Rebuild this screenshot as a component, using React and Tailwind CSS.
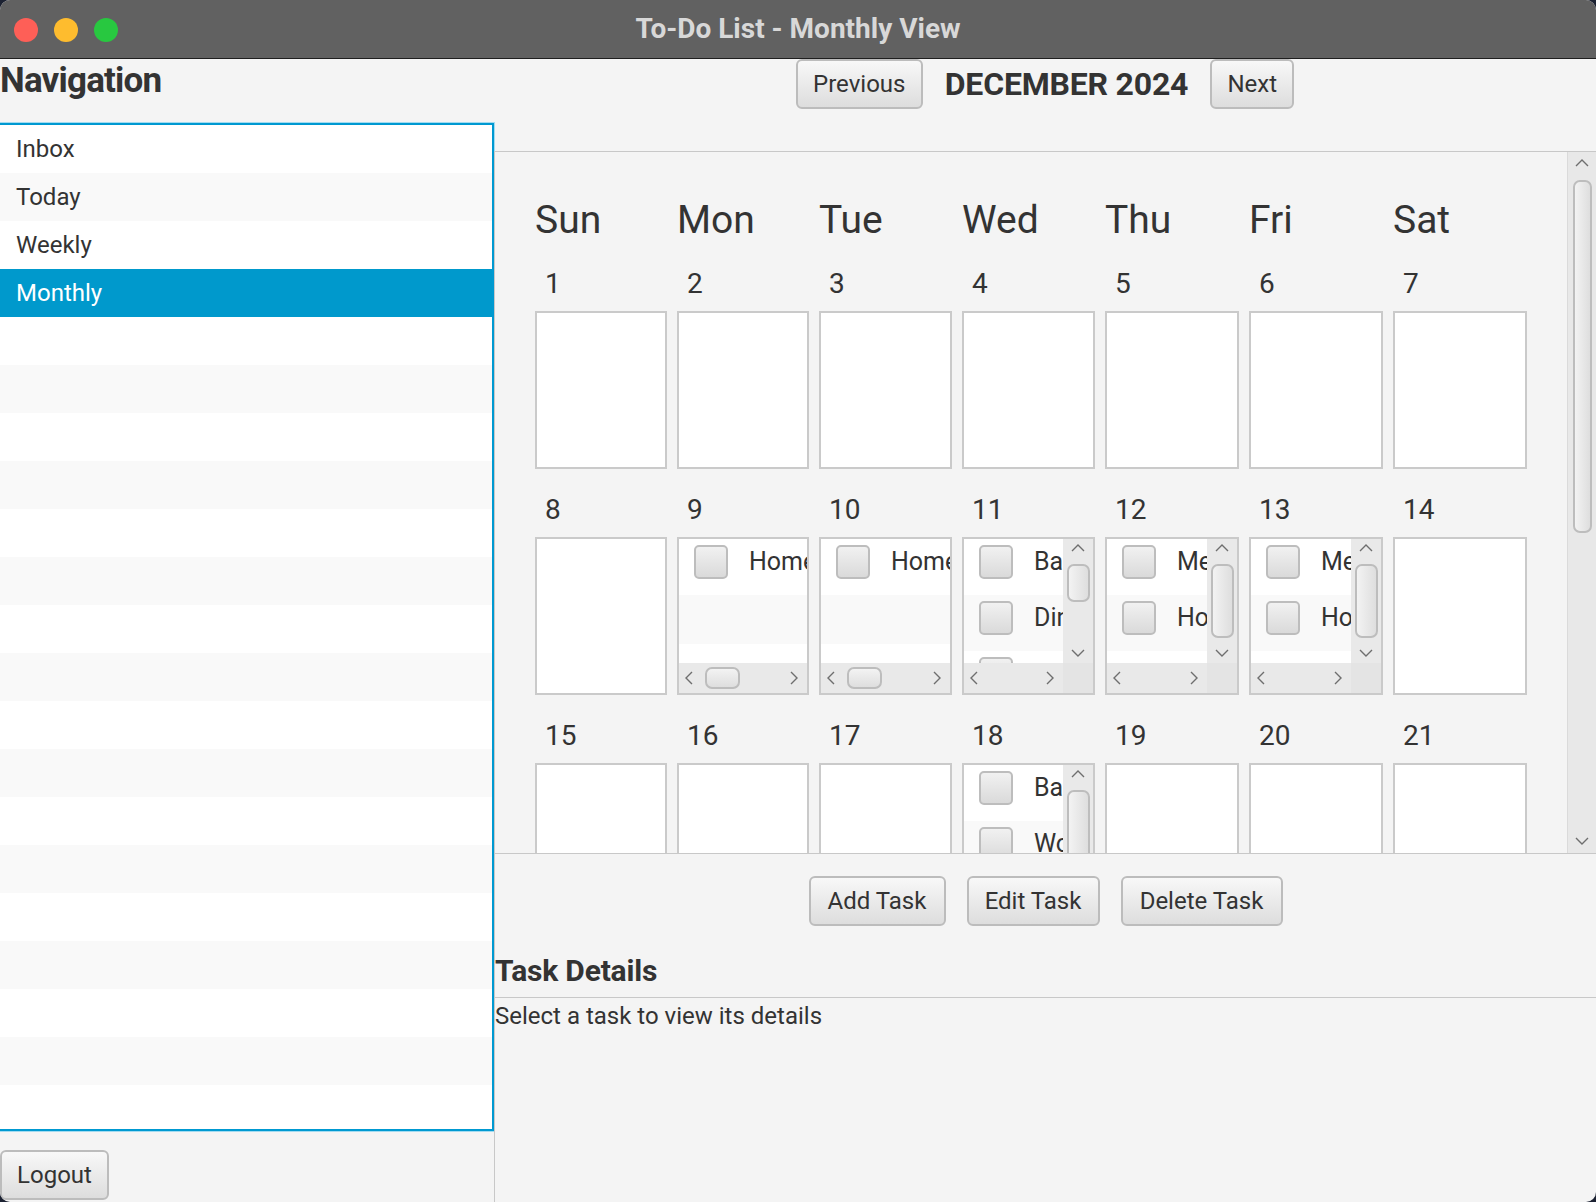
import React from "react";

const days = ["Sun", "Mon", "Tue", "Wed", "Thu", "Fri", "Sat"];
const colWidths = ["pr-[10px]", "pr-[10px]", "pr-[10px]", "pr-[10px]", "pr-[10px]", "pr-[10px]", ""];

// tasks shown inside the day cells
const weeks = [
  [{ n: 1 }, { n: 2 }, { n: 3 }, { n: 4 }, { n: 5 }, { n: 6 }, { n: 7 }],
  [
    { n: 8 },
    { n: 9, items: ["Homework"] },
    { n: 10, items: ["Homework"] },
    { n: 11, items: ["Bank", "Dinner", "Gym"], vthumb: 38 },
    { n: 12, items: ["Meeting", "Homework"], vthumb: 74 },
    { n: 13, items: ["Meeting", "Homework"], vthumb: 74 },
    { n: 14 },
  ],
  [
    { n: 15 },
    { n: 16 },
    { n: 17 },
    { n: 18, items: ["Bank", "Work"], vthumb: 74 },
    { n: 19 },
    { n: 20 },
    { n: 21 },
  ],
];

const navItems = ["Inbox", "Today", "Weekly", "Monthly"];

function Chevron({ dir }) {
  const vertical = dir === "up" || dir === "down";
  const pts = {
    up: "1,7 7,1 13,7",
    down: "1,1 7,7 13,1",
    left: "7,1 1,7 7,13",
    right: "1,1 7,7 1,13",
  };
  return (
    <svg
      width={vertical ? 14 : 8}
      height={vertical ? 8 : 14}
      viewBox={vertical ? "0 0 14 8" : "0 0 8 14"}
      className="shrink-0"
    >
      <polyline points={pts[dir]} fill="none" stroke="#6e6e6e" strokeWidth="1.4" />
    </svg>
  );
}

function Button({ children, className = "" }) {
  return (
    <button
      className={`flex h-[50px] shrink-0 items-center justify-center rounded-[6px] border-2 border-[#bcbcbc] bg-linear-to-b from-[#f8f8f8] to-[#dddddd] text-[24px] leading-none text-[#333] ${className}`}
    >
      {children}
    </button>
  );
}

function Checkbox() {
  return (
    <div className="h-[34px] w-[34px] shrink-0 rounded-[5px] border-2 border-[#bdbdbd] bg-linear-to-b from-[#f1f1f1] to-[#dadada]" />
  );
}

function VScroll({ thumb }) {
  return (
    <div className="flex w-[30px] shrink-0 flex-col items-center bg-[#e9e9e9] pt-[5px] pb-[6px]">
      <Chevron dir="up" />
      <div
        className="mt-[12px] w-[23px] shrink-0 rounded-[7px] border-2 border-[#bdbdbd] bg-linear-to-r from-[#f3f3f3] to-[#dedede]"
        style={{ height: thumb }}
      />
      <div className="mt-auto">
        <Chevron dir="down" />
      </div>
    </div>
  );
}

function HScroll({ thumb, corner }) {
  return (
    <div className="flex h-[30px] shrink-0 bg-[#e9e9e9]">
      <div className="flex flex-1 items-center pl-[6px] pr-[9px]">
        <Chevron dir="left" />
        {thumb && (
          <div className="ml-[12px] h-[22px] w-[35px] rounded-[7px] border-2 border-[#bdbdbd] bg-linear-to-b from-[#f3f3f3] to-[#dedede]" />
        )}
        <div className="ml-auto">
          <Chevron dir="right" />
        </div>
      </div>
      {corner && <div className="w-[30px] bg-[#e4e4e4]" />}
    </div>
  );
}

function DayCell({ day }) {
  if (!day.items) {
    return <div className="h-[158px] border-2 border-[#cacaca] bg-white" />;
  }
  return (
    <div className="flex h-[158px] flex-col overflow-hidden border-2 border-[#cacaca] bg-white">
      <div className="flex min-h-0 flex-1">
        <div className="min-w-0 flex-1 overflow-hidden">
          {day.items.map((label, i) => (
            <div
              key={i}
              className={`flex h-[56px] items-center pb-[10px] pl-[15px] ${i % 2 ? "bg-[#f9f9f9]" : "bg-white"}`}
            >
              <Checkbox />
              <span className="ml-[21px] whitespace-nowrap text-[25px] text-[#333]">{label}</span>
            </div>
          ))}
          {!day.vthumb && <div className="h-[49px] bg-[#f9f9f9]" />}
        </div>
        {day.vthumb && <VScroll thumb={day.vthumb} />}
      </div>
      <HScroll thumb={!day.vthumb} corner={!!day.vthumb} />
    </div>
  );
}

export default function App() {
  const navRows = Array.from({ length: 21 }, (_, i) => navItems[i] || "");

  return (
    <div className="h-[1202px] w-[1596px] overflow-hidden bg-[#1c2232] font-['Roboto','Noto_Sans',sans-serif] text-[#333]">
      <div className="flex h-full flex-col overflow-hidden rounded-[10px] bg-[#f4f4f4]">
        {/* title bar */}
        <div className="grid h-[59px] shrink-0 grid-cols-[1fr_auto_1fr] items-center border-b border-[#1f1f1f] bg-[#616161]">
          <div className="flex gap-[16px] pl-[14px] pt-[2px]">
            <div className="h-[24px] w-[24px] rounded-full bg-[#fe5f57]" />
            <div className="h-[24px] w-[24px] rounded-full bg-[#febc2e]" />
            <div className="h-[24px] w-[24px] rounded-full bg-[#28c840]" />
          </div>
          <div className="text-[28px] font-bold text-[#d8d8d8]">To-Do List - Monthly View</div>
          <div />
        </div>

        <div className="flex min-h-0 flex-1">
          {/* navigation */}
          <aside className="flex w-[494px] shrink-0 flex-col">
            <h2 className="mt-[4px] h-[35px] text-[35px] font-bold leading-[35px] tracking-[-0.8px]">Navigation</h2>
            <div className="-ml-[3px] mt-[25px] h-[1008px] w-[497px] overflow-hidden border-2 border-[#0099d1] bg-white shadow-[0_0_0_1px_#a3dbf0]">
              {navRows.map((label, i) => (
                <div
                  key={i}
                  className={`flex h-[48px] items-center pl-[17px] text-[24px] ${
                    label === "Monthly"
                      ? "bg-[#0099cc] text-white"
                      : i % 2
                      ? "bg-[#f9f9f9] text-[#333]"
                      : "bg-white text-[#333]"
                  }`}
                >
                  {label}
                </div>
              ))}
            </div>
            <Button className="mt-[19px] w-[109px]">Logout</Button>
          </aside>

          {/* calendar */}
          <main className="flex min-w-0 flex-1 flex-col">
            <div className="flex h-[92px] shrink-0 items-start justify-center gap-[22px]">
              <Button className="w-[127px]">Previous</Button>
              <div className="flex h-[50px] items-center text-[32px] font-bold tracking-[-0.2px]">DECEMBER 2024</div>
              <Button className="w-[84px]">Next</Button>
            </div>

            <div className="flex h-[703px] shrink-0 border-y border-l border-[#c8c8c8]">
              <div className="min-w-0 flex-1 overflow-hidden pl-[40px] pt-[48px]">
                <div className="grid grid-cols-[142px_142px_143px_143px_144px_144px_134px]">
                  {days.map((d) => (
                    <div key={d} className="text-[39px] leading-[40px]">
                      {d}
                    </div>
                  ))}
                </div>
                {weeks.map((week, wi) => (
                  <div key={wi} className={wi === 0 ? "mt-[30px]" : "mt-[27px]"}>
                    <div className="grid grid-cols-[142px_142px_143px_143px_144px_144px_134px]">
                      {week.map((day) => (
                        <div key={day.n} className="h-[28px] pl-[10px] text-[28px] leading-[28px]">
                          {day.n}
                        </div>
                      ))}
                    </div>
                    <div className="mt-[13px] grid grid-cols-[142px_142px_143px_143px_144px_144px_134px]">
                      {week.map((day, di) => (
                        <div key={day.n} className={colWidths[di]}>
                          <DayCell day={day} />
                        </div>
                      ))}
                    </div>
                  </div>
                ))}
              </div>
              <div className="flex w-[29px] shrink-0 flex-col items-center border-l border-[#dadada] bg-[#e8e8e8] pt-[7px] pb-[8px]">
                <Chevron dir="up" />
                <div className="mt-[13px] h-[353px] w-[19px] rounded-[7px] border-2 border-[#bdbdbd] bg-linear-to-r from-[#f3f3f3] to-[#dedede]" />
                <div className="mt-auto">
                  <Chevron dir="down" />
                </div>
              </div>
            </div>

            <div className="flex flex-1 flex-col border-l border-[#c8c8c8]">
              <div className="flex justify-center gap-[21px] pt-[22px]">
                <Button className="w-[137px]">Add Task</Button>
                <Button className="w-[133px]">Edit Task</Button>
                <Button className="w-[162px]">Delete Task</Button>
              </div>
              <h3 className="mt-[30px] h-[29px] text-[30px] font-bold leading-[29px] tracking-[-0.2px]">Task Details</h3>
              <div className="mt-[12px] border-t border-[#c8c8c8] pt-[6px] text-[24px] leading-[24px]">
                Select a task to view its details
              </div>
            </div>
          </main>
        </div>
      </div>
    </div>
  );
}
